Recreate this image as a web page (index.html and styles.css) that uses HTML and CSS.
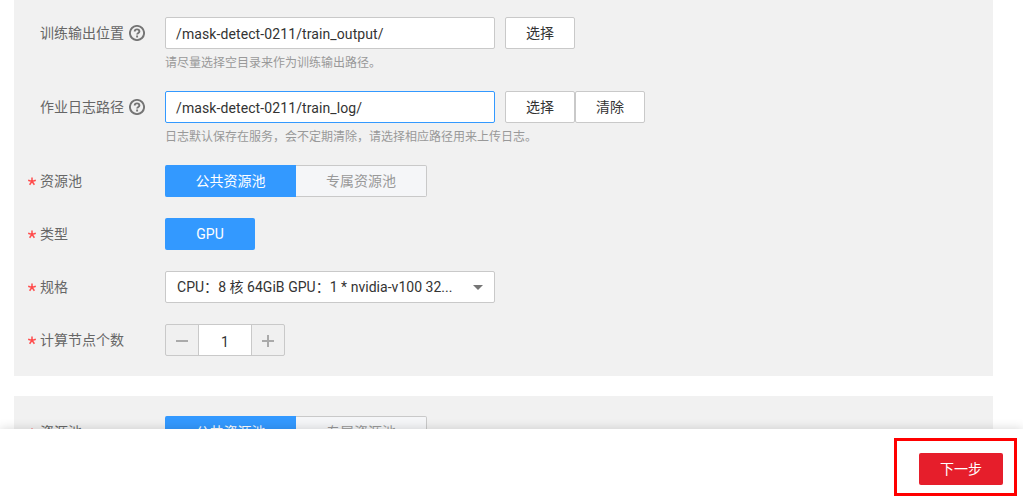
FILE: index.html
```html
<!DOCTYPE html>
<html lang="zh-CN">
<head>
<meta charset="utf-8">
<title>训练作业</title>
<link rel="stylesheet" href="styles.css">
</head>
<body>
<main class="content">
  <section class="panel">
    <div class="row with-hint">
      <div class="label">训练输出位置
        <svg class="help" viewBox="0 0 16 16"><circle cx="8" cy="8" r="7.1"/><path d="M5.7 6.6C5.7 5 6.7 4.4 8 4.4s2.4.8 2.4 2c0 1.5-2.3 1.6-2.3 3.2M8.1 10.6v1.8"/></svg>
      </div>
      <div class="field">
        <div class="controls"><div class="input"><span class="path">/mask-detect-0211/train_output/</span></div><div class="btn">选择</div></div>
        <div class="hint">请尽量选择空目录来作为训练输出路径。</div>
      </div>
    </div>
    <div class="row with-hint">
      <div class="label">作业日志路径
        <svg class="help" viewBox="0 0 16 16"><circle cx="8" cy="8" r="7.1"/><path d="M5.7 6.6C5.7 5 6.7 4.4 8 4.4s2.4.8 2.4 2c0 1.5-2.3 1.6-2.3 3.2M8.1 10.6v1.8"/></svg>
      </div>
      <div class="field">
        <div class="controls"><div class="input focused"><span class="path">/mask-detect-0211/train_log/</span></div><div class="btn">选择</div><div class="btn">清除</div></div>
        <div class="hint">日志默认保存在服务，会不定期清除，请选择相应路径用来上传日志。</div>
      </div>
    </div>
    <div class="row">
      <div class="label"><svg class="star" viewBox="0 0 8 8"><path d="M4 .4v4M.2 3.2 4 4.4l3.8-1.2M1.6 7.8 4 4.4l2.4 3.4"/></svg>资源池</div>
      <div class="tabs"><div class="tab active">公共资源池</div><div class="tab">专属资源池</div></div>
    </div>
    <div class="row">
      <div class="label"><svg class="star" viewBox="0 0 8 8"><path d="M4 .4v4M.2 3.2 4 4.4l3.8-1.2M1.6 7.8 4 4.4l2.4 3.4"/></svg>类型</div>
      <div class="type">GPU</div>
    </div>
    <div class="row">
      <div class="label"><svg class="star" viewBox="0 0 8 8"><path d="M4 .4v4M.2 3.2 4 4.4l3.8-1.2M1.6 7.8 4 4.4l2.4 3.4"/></svg>规格</div>
      <div class="input select"><span class="spec">CPU：8 核 64GiB GPU：1 * nvidia-v100 32...</span><svg class="caret" viewBox="0 0 10 5"><path d="M0 0h10L5 5z"/></svg></div>
    </div>
    <div class="row">
      <div class="label"><svg class="star" viewBox="0 0 8 8"><path d="M4 .4v4M.2 3.2 4 4.4l3.8-1.2M1.6 7.8 4 4.4l2.4 3.4"/></svg>计算节点个数</div>
      <div class="stepper">
        <div class="step"><svg class="sign" viewBox="0 0 12 12"><path d="M0 6h12"/></svg></div>
        <div class="count">1</div>
        <div class="step"><svg class="sign" viewBox="0 0 12 12"><path d="M0 6h12M6 0v12"/></svg></div>
      </div>
    </div>
  </section>
  <section class="panel summary">
    <div class="row">
      <div class="label"><svg class="star" viewBox="0 0 8 8"><path d="M4 .4v4M.2 3.2 4 4.4l3.8-1.2M1.6 7.8 4 4.4l2.4 3.4"/></svg>资源池</div>
      <div class="tabs"><div class="tab active">公共资源池</div><div class="tab">专属资源池</div></div>
    </div>
  </section>
</main>
<footer class="footer">
  <div class="highlight"><div class="next">下一步</div></div>
</footer>
</body>
</html>
```
FILE: styles.css
```css
* { box-sizing: border-box; }
body {
  margin: 0;
  height: 502px;
  overflow: hidden;
  display: flex;
  flex-direction: column;
  background: #fff;
  color: #666;
  font: 14px/20px Roboto, "Noto Sans CJK SC", sans-serif;
  white-space: nowrap;
}
.content { height: 429px; overflow: hidden; display: flex; flex-direction: column; gap: 20px; }
.panel {
  flex: none;
  width: 979px;
  height: 376px;
  margin-left: 14px;
  padding: 17px 0 0 14px;
  background: #f1f1f1;
  display: flex;
  flex-direction: column;
  gap: 21px;
}
.summary { height: 92px; padding-top: 20px; }
.row { display: flex; height: 32px; }
.with-hint { height: 53px; }
.label { width: 137px; height: 32px; display: flex; align-items: center; }
.with-hint .label { padding-left: 12px; }
.help { width: 16px; height: 16px; margin-left: 5px; fill: none; stroke: #757575; stroke-width: 1.9; }
.star { width: 8px; height: 8px; margin: 0 4px 0 0; fill: none; stroke: #ff4c4c; stroke-width: 1.5; overflow: visible; }
.controls { display: flex; }
.input {
  width: 330px;
  height: 32px;
  padding: 0 11px;
  display: flex;
  align-items: center;
  background: #fff;
  border: 1px solid #c9c9c9;
  border-radius: 2px;
  color: #333;
}
.controls .input { margin-right: 10px; padding-left: 10px; }
.path { padding-top: 2px; letter-spacing: .1px; }
.spec { letter-spacing: .03px; }
.focused { border-color: #3399ff; }
.btn {
  width: 70px;
  height: 32px;
  background: #fff;
  border: 1px solid #c9c9c9;
  border-radius: 2px;
  color: #333;
  line-height: 30px;
  text-align: center;
}
.hint { color: #999; font-size: 12px; line-height: 18px; margin-top: 5px; }
.tabs { display: flex; }
.tab {
  width: 131px;
  height: 32px;
  border: 1px solid #c9c9c9;
  border-left: 0;
  border-radius: 0 2px 2px 0;
  background: #f5f6f8;
  color: #999;
  line-height: 30px;
  text-align: center;
}
.active { border-color: #3399ff; border-radius: 2px 0 0 2px; background: #3399ff; color: #fff; padding-left: 1px; }
.type { width: 90px; height: 32px; border-radius: 2px; background: #3399ff; color: #fff; line-height: 32px; text-align: center; }
.select { justify-content: space-between; }
.caret { width: 10px; height: 5px; fill: #757575; }
.stepper { width: 120px; display: flex; border: 1px solid #c9c9c9; border-radius: 2px; background: #f0f0f0; }
.step { flex: 1; display: flex; align-items: center; justify-content: center; }
.sign { width: 12px; height: 12px; margin-top: 2px; fill: none; stroke: #aaa; stroke-width: 2; }
.count { width: 54px; background: #fff; border: solid #c9c9c9; border-width: 0 1px; color: #333; line-height: 34px; text-align: center; }
.footer {
  position: relative;
  height: 73px;
  padding: 9px 6px 0 0;
  display: flex;
  justify-content: flex-end;
  background: #fff;
  box-shadow: 0 0 10px rgba(0, 0, 0, .17);
}
.highlight { width: 123px; height: 58px; border: 3px solid #f00; padding: 12px 0 0 22px; }
.next { width: 84px; height: 32px; border-radius: 2px; background: #e61e2b; color: #fff; line-height: 32px; text-align: center; }
```
